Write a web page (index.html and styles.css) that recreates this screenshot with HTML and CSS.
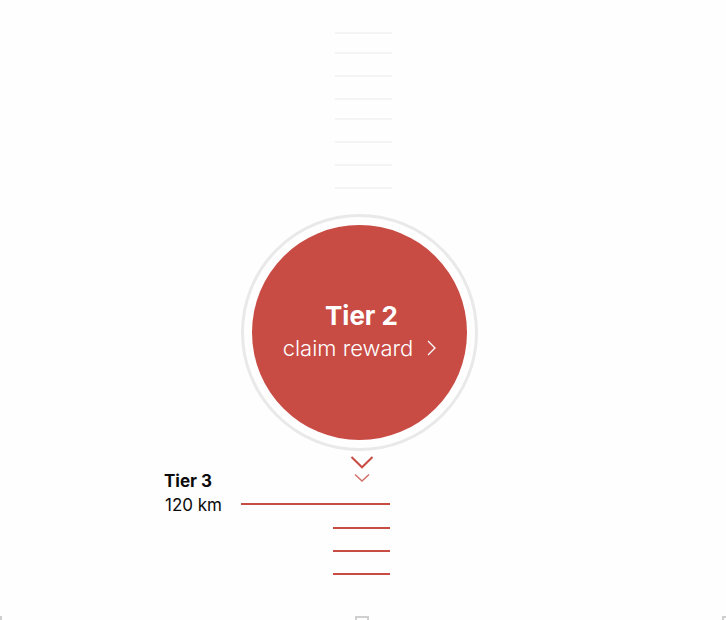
FILE: index.html
```html
<!DOCTYPE html>
<html lang="en">
<head>
<meta charset="utf-8">
<title>Reward tiers</title>
<link rel="stylesheet" href="styles.css">
</head>
<body>
<main class="ladder">
  <div class="passed">
    <span class="tick"></span>
    <span class="tick near"></span>
    <span class="tick"></span>
    <span class="tick"></span>
    <span class="tick near"></span>
    <span class="tick"></span>
    <span class="tick"></span>
    <span class="tick"></span>
  </div>
  <div class="ring">
    <button class="reward" type="button">
      <strong class="reward-title">Tier 2</strong>
      <span class="reward-action">claim reward
        <svg class="arrow" viewBox="0 0 9 16" aria-hidden="true"><path d="M1 1L8 8L1 15"/></svg>
      </span>
    </button>
  </div>
  <svg class="chevrons" viewBox="0 0 24 28" aria-hidden="true">
    <path class="first" d="M1.5 2L12 12.3L22.5 2"/>
    <path class="second" d="M5 19.5L12 26L19 19.5"/>
  </svg>
  <section class="next">
    <div class="next-label">
      <h2 class="next-title">Tier 3</h2>
      <p class="next-distance">120 km</p>
    </div>
    <span class="milestone"></span>
  </section>
  <div class="ahead">
    <span class="tick"></span>
    <span class="tick"></span>
    <span class="tick"></span>
  </div>
</main>
<div class="handles">
  <span class="handle left"></span>
  <span class="handle middle"></span>
  <span class="handle right"></span>
</div>
</body>
</html>
```
FILE: styles.css
```css
* {
  box-sizing: border-box;
}

body {
  margin: 0;
  min-height: 100vh;
  display: flex;
  flex-direction: column;
  background: #fefefe;
  color: #0b0b0b;
  font-family: Inter, "Liberation Sans", sans-serif;
}

.ladder {
  flex: 1;
  display: flex;
  flex-direction: column;
  align-items: center;
}

.passed,
.ahead {
  display: flex;
  flex-direction: column;
}

.passed {
  padding-top: 11px;
}

.tick {
  width: 57px;
  height: 2px;
  margin-top: 21px;
  background: #c84b44;
}

.passed .tick {
  background: #f4f4f4;
}

.passed .near {
  margin-top: 18px;
}

.ring {
  width: 237px;
  height: 237px;
  margin: 25px 7px 0 0;
  padding: 8px;
  border: 3px solid #e9e9e9;
  border-radius: 50%;
}

.reward {
  display: flex;
  flex-direction: column;
  align-items: center;
  justify-content: center;
  width: 100%;
  height: 100%;
  padding: 0 0 2px;
  border: 0;
  border-radius: 50%;
  background: #c84b44;
  color: #fff;
  font-family: inherit;
  cursor: pointer;
}

.reward-title {
  padding-left: 4px;
  font-size: 26px;
  line-height: 32px;
  font-weight: 700;
}

.reward-action {
  display: flex;
  align-items: center;
  gap: 14px;
  font-size: 22px;
  line-height: 32px;
  font-weight: 300;
}

.arrow {
  width: 9px;
  height: 16px;
  fill: none;
  stroke: #fff;
  stroke-width: 1.3;
}

.chevrons {
  width: 24px;
  height: 28px;
  margin: 4px 2px 0 0;
  fill: none;
  stroke: #c84b44;
}

.first {
  stroke-width: 2;
}

.second {
  stroke-width: 1.5;
  opacity: 0.8;
}

.next {
  display: flex;
  align-items: flex-end;
  justify-content: flex-end;
  gap: 19px;
  align-self: flex-start;
  width: calc(50% + 27px);
  margin-top: -14px;
}

.next-label {
  width: 58px;
}

.next-title,
.next-distance {
  margin: 0;
  font-size: 17px;
  line-height: 24px;
  white-space: nowrap;
}

.next-title {
  font-weight: 700;
}

.next-distance {
  font-weight: 400;
  text-align: right;
}

.milestone {
  width: 149px;
  height: 2px;
  margin-bottom: 12px;
  background: #c84b44;
}

.ahead {
  margin: -11px 3px 0 0;
}

.handles {
  display: flex;
  justify-content: space-between;
  height: 4px;
}

.handle {
  border: 2px solid #cfcfcf;
  border-bottom: 0;
}

.left {
  width: 2px;
  border-left: 0;
}

.middle {
  width: 14px;
}

.right {
  width: 4px;
  border-right: 0;
}
```
